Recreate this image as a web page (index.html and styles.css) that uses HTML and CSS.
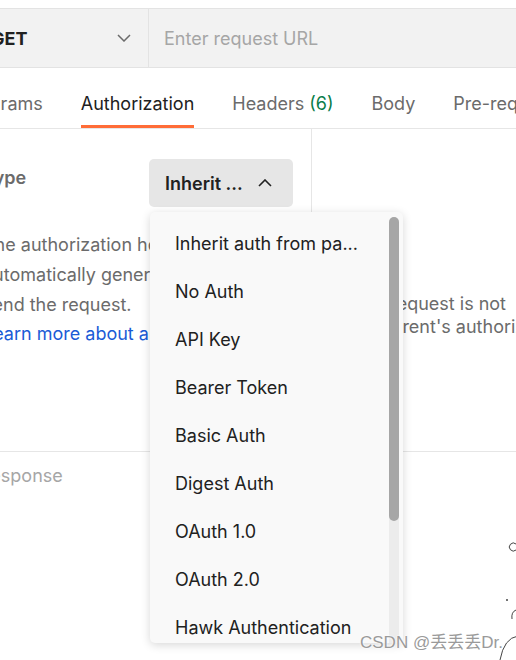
FILE: index.html
```html
<!DOCTYPE html>
<html>
<head>
<meta charset="utf-8">
<link rel="stylesheet" href="styles.css">
</head>
<body>
<div class="app">
  <div class="topbar">
    <div class="method">
      <span class="method-name">GET</span>
      <svg class="chev" width="14" height="8" viewBox="0 0 14 8"><path d="M1 1l6 6 6-6" fill="none" stroke="#6b6b6b" stroke-width="1.5"/></svg>
    </div>
    <div class="url">Enter request URL</div>
  </div>
  <div class="tabs">
    <div class="tab">Params</div>
    <div class="tab active">Authorization</div>
    <div class="tab">Headers <span class="count">(6)</span></div>
    <div class="tab">Body</div>
    <div class="tab">Pre-request Script</div>
  </div>
  <div class="content">
    <div class="left">
      <div class="type-row">
        <div class="type-label">Type</div>
        <div class="type-btn">
          <span>Inherit ...</span>
          <svg width="14" height="8" viewBox="0 0 14 8"><path d="M1 7l6-6 6 6" fill="none" stroke="#212121" stroke-width="1.6"/></svg>
        </div>
      </div>
      <p class="desc">The authorization header will be<br>automatically generated when you<br>send the request.</p>
      <a class="learn">Learn more about authorization</a>
    </div>
    <div class="right">
      <div class="info">
        <div class="l1">This request is not</div>
        <div class="l2">the parent's authorization</div>
      </div>
    </div>
  </div>
  <div class="response">Response</div>

  <div class="dropdown">
    <ul class="menu">
      <li>Inherit auth from pa...</li>
      <li>No Auth</li>
      <li>API Key</li>
      <li>Bearer Token</li>
      <li>Basic Auth</li>
      <li>Digest Auth</li>
      <li>OAuth 1.0</li>
      <li>OAuth 2.0</li>
      <li>Hawk Authentication</li>
    </ul>
    <div class="track"><div class="thumb"></div></div>
  </div>

  <svg class="doodle" width="24" height="130" viewBox="0 0 24 130">
    <path d="M22 14 a4 4 0 1 0 0 6" fill="none" stroke="#444" stroke-width="1"/>
    <circle cx="13" cy="70" r="1" fill="#444"/>
    <path d="M22 80 q-5 2 -4 9" fill="none" stroke="#444" stroke-width="1"/>
    <path d="M24 106 q-14 2 -18 24" fill="none" stroke="#444" stroke-width="1"/>
  </svg>
  <div class="watermark">CSDN @丢丢丢Dr.</div>
</div>
</body>
</html>
```
FILE: styles.css
```css
* { box-sizing: border-box; }
html, body { margin: 0; padding: 0; }
body {
  width: 516px;
  height: 660px;
  overflow: hidden;
  background: #fff;
  font-family: Inter, "Noto Sans", sans-serif;
  font-size: 18px;
  color: #212121;
}
.app { position: relative; width: 516px; height: 660px; overflow: hidden; }

.topbar {
  margin-top: 8px;
  height: 60px;
  display: flex;
  background: #f2f2f2;
  border-top: 1px solid #e3e3e3;
  border-bottom: 1px solid #e3e3e3;
}
.method {
  margin-left: -20px;
  width: 169px;
  flex: none;
  display: flex;
  align-items: center;
  justify-content: space-between;
  padding: 0 17px 0 11px;
  border-right: 1px solid #e3e3e3;
}
.method-name { font-weight: 700; color: #212121; }
.url {
  display: flex;
  align-items: center;
  padding-left: 15px;
  color: #a6a6a6;
}

.tabs {
  height: 61px;
  display: flex;
  gap: 38px;
  margin-left: -21px;
  border-bottom: 1px solid #e6e6e6;
  white-space: nowrap;
}
.tab {
  display: flex;
  align-items: center;
  color: #6b6b6b;
  border-bottom: 3px solid transparent;
  padding-top: 14px;
}
.tab.active { color: #212121; border-bottom-color: #ff6c37; }
.count { color: #0a7d4a; margin-left: 5px; }

.content {
  display: flex;
  height: 323px;
  border-bottom: 1px solid #e6e6e6;
}
.left {
  margin-left: -17px;
  width: 329px;
  flex: none;
  border-right: 1px solid #e6e6e6;
  padding-right: 18px;
  padding-top: 30px;
}
.type-row {
  display: flex;
  align-items: center;
  justify-content: space-between;
  height: 48px;
}
.type-label {
  font-weight: 600;
  color: #6b6b6b;
  align-self: flex-start;
  margin-top: 8px;
}
.type-btn {
  width: 144px;
  height: 48px;
  background: #e6e6e6;
  border-radius: 5px;
  display: flex;
  align-items: center;
  justify-content: space-between;
  padding: 0 21px 0 16px;
  font-weight: 600;
  color: #212121;
}
.desc {
  margin: 23px 0 0;
  line-height: 30px;
  color: #6b6b6b;
  white-space: nowrap;
}
.learn {
  display: block;
  line-height: 28px;
  color: #1a5bd6;
  white-space: nowrap;
}
.right {
  flex: 1;
  padding-left: 37px;
  padding-top: 163px;
}
.info {
  line-height: 23px;
  color: #6b6b6b;
  white-space: nowrap;
}

.response {
  margin-left: -21px;
  margin-top: 13px;
  color: #a6a6a6;
}

.dropdown {
  position: absolute;
  left: 150px;
  top: 212px;
  width: 253px;
  height: 431px;
  background: #f9f9f9;
  border-radius: 5px;
  box-shadow: 0 2px 10px rgba(0,0,0,0.16);
  overflow: hidden;
}
.menu {
  list-style: none;
  margin: 0;
  padding: 8px 0 0;
}
.menu li {
  height: 48px;
  line-height: 48px;
  padding-left: 25px;
  color: #212121;
  white-space: nowrap;
}
.track {
  position: absolute;
  right: 4px;
  top: 5px;
  bottom: 0;
  width: 10px;
  background: #ececec;
  border-radius: 5px 5px 0 0;
}
.thumb {
  height: 304px;
  background: #a6a6a6;
  border-radius: 5px;
}

.doodle { position: absolute; left: 494px; top: 530px; }
.watermark {
  position: absolute;
  left: 360px;
  top: 628px;
  font-family: "Liberation Sans", "Noto Sans CJK SC", sans-serif;
  font-size: 17px;
  color: #9a9a9a;
  text-shadow: 0 0 2px #fff, 0 0 2px #fff;
  white-space: nowrap;
}
```
